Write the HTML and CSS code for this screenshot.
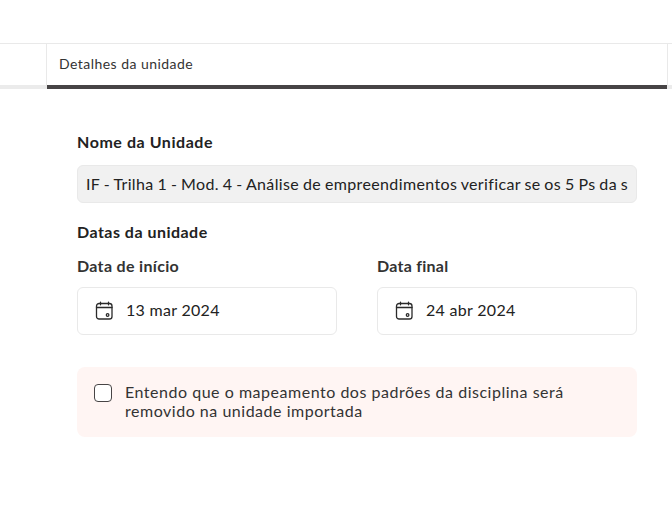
FILE: index.html
```html
<!DOCTYPE html>
<html lang="pt-BR">
<head>
<meta charset="utf-8">
<title>Detalhes da unidade</title>
<link rel="stylesheet" href="styles.css">
</head>
<body>
<nav class="tabs">
  <div class="tab-edge"></div>
  <div class="tab"><span class="tab-label">Detalhes da unidade</span></div>
  <div class="tab-edge tab-edge-end"></div>
</nav>
<main class="form">
  <label class="label name-label">Nome da Unidade</label>
  <div class="name-input"><div class="name-text">IF - Trilha 1 - Mod. 4 - Análise de empreendimentos verificar se os 5 Ps da s</div></div>
  <h2 class="label dates-title">Datas da unidade</h2>
  <div class="dates">
    <div class="date-field">
      <label class="label date-label start-label">Data de início</label>
      <div class="date-box">
        <svg class="calendar" width="18" height="20" viewBox="0 0 18 20" fill="none" stroke="#2b2b2b" stroke-width="1.3" stroke-linecap="round"><rect x="1.5" y="2.5" width="15.5" height="15.5" rx="2.6"/><path d="M1.5 6.5H17M5.5 1.2v2.6M13.5 1.2v2.6"/><circle cx="12.6" cy="14" r="1.3"/></svg>
        <span class="date-text">13 mar 2024</span>
      </div>
    </div>
    <div class="date-field">
      <label class="label date-label end-label">Data final</label>
      <div class="date-box">
        <svg class="calendar" width="18" height="20" viewBox="0 0 18 20" fill="none" stroke="#2b2b2b" stroke-width="1.3" stroke-linecap="round"><rect x="1.5" y="2.5" width="15.5" height="15.5" rx="2.6"/><path d="M1.5 6.5H17M5.5 1.2v2.6M13.5 1.2v2.6"/><circle cx="12.6" cy="14" r="1.3"/></svg>
        <span class="date-text">24 abr 2024</span>
      </div>
    </div>
  </div>
  <div class="notice">
    <span class="checkbox"></span>
    <p class="notice-text">Entendo que o mapeamento dos padrões da disciplina será<br>removido na unidade importada</p>
  </div>
</main>
</body>
</html>
```
FILE: styles.css
```css
* { box-sizing: border-box; }
body {
  margin: 0;
  background: #fff;
  color: #222;
  font: 16px/20px Lato, "Open Sans", sans-serif;
  padding-top: 43px;
  overflow: hidden;
}
.tabs { display: flex; height: 46px; border-top: 1px solid #e9e9e9; }
.tab-edge { width: 47px; border-right: 1px solid #e9e9e9; border-bottom: 4px solid #ebebeb; }
.tab-edge-end { width: 5px; border-right: 0; border-left: 1px solid #e9e9e9; }
.tab { width: 620px; border-bottom: 4px solid #474445; padding: 10px 12px 0; font-size: 14px; color: #333; }
.tab-label { letter-spacing: .46px; }
.form { width: 560px; margin: 43px 0 0 77px; }
.label { display: block; height: 20px; margin: 0; font-size: 16px; font-weight: 700; white-space: nowrap; }
.name-label { letter-spacing: .56px; }
.name-input { height: 38px; margin-top: 13px; padding: 8px 8px 0; background: #f1f1f1; border: 1px solid #e9e9e9; border-radius: 6px; }
.name-text { overflow: hidden; white-space: nowrap; letter-spacing: .36px; word-spacing: -.6px; }
.dates-title { margin-top: 19px; letter-spacing: .48px; }
.dates { display: flex; gap: 40px; margin-top: 14px; }
.date-field { flex: 1; }
.date-label { color: #333; letter-spacing: .32px; }
.end-label { letter-spacing: .25px; }
.date-box { display: flex; align-items: center; height: 48px; margin-top: 11px; padding-left: 17px; border: 1px solid #e9e9e9; border-radius: 6px; }
.calendar { margin-right: 13px; }
.date-text { letter-spacing: .3px; padding-bottom: 2px; }
.notice { display: flex; height: 70px; margin-top: 32px; padding: 17px; background: #fff5f3; border-radius: 8px; }
.checkbox { width: 18px; height: 18px; margin-right: 13px; background: #fff; border: 1px solid #474445; border-radius: 4px; }
.notice-text { margin: -2px 0 0; line-height: 19px; color: #333; white-space: nowrap; letter-spacing: .52px; }
```
